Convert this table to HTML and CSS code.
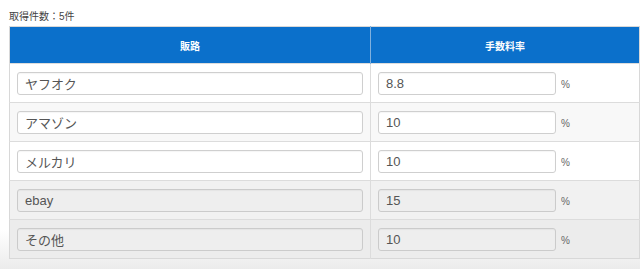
FILE: index.html
```html
<!DOCTYPE html>
<html lang="ja">
<head>
<meta charset="utf-8">
<link rel="stylesheet" href="styles.css">
</head>
<body>
<div class="page">
  <p class="count">取得件数：5件</p>
  <table class="fees">
    <thead>
      <tr><th class="col-route">販路</th><th class="col-rate">手数料率</th></tr>
    </thead>
    <tbody>
      <tr class="row">
        <td><input class="field" type="text" value="ヤフオク"></td>
        <td><div class="rate"><input class="field field-rate" type="text" value="8.8"><span class="pct">%</span></div></td>
      </tr>
      <tr class="row row-alt">
        <td><input class="field" type="text" value="アマゾン"></td>
        <td><div class="rate"><input class="field field-rate" type="text" value="10"><span class="pct">%</span></div></td>
      </tr>
      <tr class="row">
        <td><input class="field" type="text" value="メルカリ"></td>
        <td><div class="rate"><input class="field field-rate" type="text" value="10"><span class="pct">%</span></div></td>
      </tr>
      <tr class="row row-grey">
        <td><input class="field field-off" type="text" value="ebay"></td>
        <td><div class="rate"><input class="field field-rate field-off" type="text" value="15"><span class="pct">%</span></div></td>
      </tr>
      <tr class="row row-grey2">
        <td><input class="field field-off" type="text" value="その他"></td>
        <td><div class="rate"><input class="field field-rate field-off" type="text" value="10"><span class="pct">%</span></div></td>
      </tr>
    </tbody>
  </table>
</div>
</body>
</html>
```

FILE: styles.css
```css
html, body {
  margin: 0;
  padding: 0;
  height: 269px;
  overflow: hidden;
  background: linear-gradient(to bottom, #ffffff 0, #ffffff 230px, #ebebeb 269px);
  font-family: "Liberation Sans", "Noto Sans CJK JP", sans-serif;
}

.page {
  padding: 11px 0 0 9px;
}

.count {
  margin: 0;
  font-size: 10px;
  line-height: 12px;
  color: #444;
  height: 15px;
}

.fees {
  width: 631px;
  border-collapse: collapse;
  table-layout: fixed;
  border: 1px solid #d8d8d8;
}

.fees th {
  background: #0b70cb;
  color: #fff;
  font-size: 10px;
  font-weight: bold;
  height: 36px;
  padding: 0;
  text-align: center;
}

.col-route {
  width: 360px;
  border-right: 1px solid #7fb0de;
}

.fees td {
  padding: 8px 7px 7px 7px;
  border-top: 1px solid #dcdcdc;
  vertical-align: middle;
  height: 23px;
}

.fees td:first-child {
  border-right: 1px solid #dcdcdc;
}

.row { background: #ffffff; }
.row-alt { background: #f8f8f8; }
.row-grey { background: #f1f1f1; }
.row-grey2 { background: #ececec; }

.field {
  box-sizing: border-box;
  display: block;
  width: 100%;
  height: 23px;
  margin: 0;
  padding: 0 7px;
  border: 1px solid #cfcfcf;
  border-radius: 3px;
  background: #fff;
  font-family: "Liberation Sans", "Noto Sans CJK JP", sans-serif;
  font-size: 13px;
  color: #555;
  box-shadow: inset 0 1px 1px rgba(0,0,0,0.04);
}

.field-off {
  background: #eeeeee;
  border-color: #cbcbcb;
}

.rate {
  display: flex;
  align-items: center;
  gap: 5px;
}

.field-rate {
  width: 178px;
  flex: none;
}

.pct {
  font-size: 10px;
  color: #666;
  padding-top: 1px;
}
```
